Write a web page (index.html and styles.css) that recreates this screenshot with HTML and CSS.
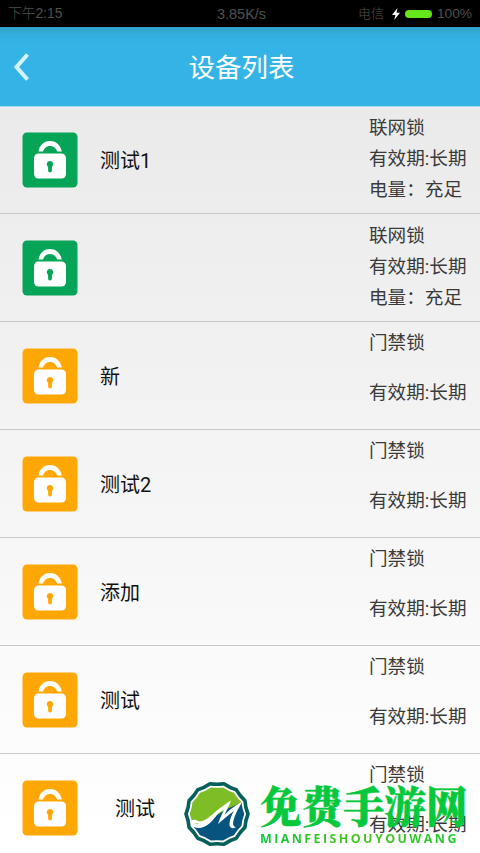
FILE: index.html
```html
<!DOCTYPE html>
<html lang="zh-CN">
<head>
<meta charset="utf-8">
<title>设备列表</title>
<link rel="stylesheet" href="styles.css">
</head>
<body>
<svg class="defs" width="0" height="0" aria-hidden="true">
  <symbol id="lock" viewBox="0 0 56 56">
    <rect x="0.5" y="0.5" width="55" height="55" rx="4.500" fill="currentColor"/>
    <path d="M16.500 19.500C17.500 13.500 21.500 9 28 9S38.500 13.500 39.800 19.500H35.300C34 16.500 32 14 28 14S22 16.500 21 19.500Z" fill="#fff"/>
    <rect x="12" y="21.500" width="32" height="25" rx="4.500" fill="#fff"/>
    <path d="M28 29a3.300 3.300 0 0 1 1.900 6V38.500a1.900 1.900 0 0 1-3.800 0V35A3.300 3.300 0 0 1 28 29Z" fill="currentColor"/>
  </symbol>
</svg>
<div class="screen">
  <div class="status">
    <span class="time">下午2:15</span>
    <span class="speed">3.85K/s</span>
    <span class="power">
      <span>电信</span>
      <svg class="bolt" viewBox="0 0 8 12"><path d="M5.500 0 0 7H3.500L2.200 12 8 4.700H4.500Z" fill="#fff"/></svg>
      <span class="battery"></span>
      <span class="percent">100%</span>
    </span>
  </div>
  <header class="bar">
    <svg class="back" viewBox="0 0 16 28"><path d="M13.500 1.500 2.500 14 13.500 26.500" fill="none" stroke="#d5f2ff" stroke-width="4"/></svg>
    <h1 class="title">设备列表</h1>
  </header>
  <ul class="list">
    <li class="row net"><svg class="lock"><use href="#lock"/></svg><span class="name">测试1</span><div class="info"><p>联网锁</p><p>有效期:长期</p><p>电量：充足</p></div></li>
    <li class="row net"><svg class="lock"><use href="#lock"/></svg><span class="name"></span><div class="info"><p>联网锁</p><p>有效期:长期</p><p>电量：充足</p></div></li>
    <li class="row door"><svg class="lock"><use href="#lock"/></svg><span class="name">新</span><div class="info"><p>门禁锁</p><p>有效期:长期</p></div></li>
    <li class="row door"><svg class="lock"><use href="#lock"/></svg><span class="name">测试2</span><div class="info"><p>门禁锁</p><p>有效期:长期</p></div></li>
    <li class="row door"><svg class="lock"><use href="#lock"/></svg><span class="name">添加</span><div class="info"><p>门禁锁</p><p>有效期:长期</p></div></li>
    <li class="row door"><svg class="lock"><use href="#lock"/></svg><span class="name">测试</span><div class="info"><p>门禁锁</p><p>有效期:长期</p></div></li>
    <li class="row door"><svg class="lock"><use href="#lock"/></svg><span class="name indent">测试</span><div class="info"><p>门禁锁</p><p>有效期:长期</p></div></li>
  </ul>
  <div class="brand">
    <svg class="logo" viewBox="-33 -33 66 66">
      <defs>
        <path id="edge" d="M31 0Q28.400 6.500 27.900 13.400 22.800 18.200 19.300 24.200 12.600 26.200 6.900 30.200 0 29.200-6.900 30.200-12.600 26.200-19.300 24.200-22.800 18.200-27.900 13.400-28.400 6.500-31 0-28.400-6.500-27.900-13.400-22.800-18.200-19.300-24.200-12.600-26.200-6.900-30.200 0-29.200 6.900-30.200 12.600-26.200 19.300-24.200 22.800-18.200 27.900-13.400 28.400-6.500 31 0Z"/>
        <clipPath id="inner"><use href="#edge" transform="scale(.88)"/></clipPath>
      </defs>
      <use href="#edge" fill="#fff" stroke="#06605a" stroke-width="3.600" stroke-linejoin="round"/>
      <g clip-path="url(#inner)">
        <path d="M-33-33H33V-12L20-6 0 7-12 10H-33Z" fill="#7fbd27"/>
        <path d="M-24 13C-13 14-6 9 0 1L12-6 24-11 33-14V33H-33V14Z" fill="#07557e"/>
        <path d="M-27 6C-23 6-22 5-19 7-10 9-6-1 14-13.500 12-8 9.500-4 7.500 1 13-5 18-8 26-13 20-4 17 3 16 9 16 12 17.500 13 19 13 15 15.500 12 14 12.500 9 13 5 14.500 1 17-3 11 1 6 6 1 10 2.500 5 5 0 7-4 0-1-2 4-7 9-13 14-18 15-23 13-19 12-17 11-18 10-20 9-23 10-27 11Z" fill="#fff"/>
      </g>
    </svg>
    <div class="words"><div class="cn">免费手游网</div><div class="en">MIANFEISHOUYOUWANG</div></div>
  </div>
</div>
</body>
</html>
```
FILE: styles.css
```css
* { box-sizing: border-box; }
body, h1, ul, p { margin: 0; padding: 0; }
body { width: 480px; height: 853px; overflow: hidden; font-family: Roboto, "Noto Sans CJK SC", sans-serif; }
.defs { position: absolute; }
.screen { position: relative; z-index: 0; height: 853px; overflow: hidden; display: flex; flex-direction: column; }
.status { flex: none; height: 27px; background: #000; color: #505050; display: grid; grid-template-columns: 1fr auto 1fr; align-items: center; padding: 1px 8px 0 8px; font-size: 13px; line-height: 26px; font-family: "Liberation Sans", "Noto Sans CJK SC", sans-serif; font-weight: 300; }
.time { font-size: 13.800px; }
.speed { font-size: 14.500px; padding-left: 3px; }
.power { display: flex; align-items: center; justify-content: flex-end; }
.percent { font-size: 13.700px; }
.bolt { width: 8px; height: 12px; margin: 0 5px 0 8px; }
.battery { width: 27px; height: 8px; border-radius: 4px; background: #66e51b; margin-right: 5px; }
.bar { flex: none; height: 80px; background: linear-gradient(#319fc6, #33aedd 7px, #34b4e6 18px); display: grid; grid-template-columns: 50px 1fr 50px; align-items: center; border-bottom: 1px solid #a8d9ec; }
.back { width: 16px; height: 28px; margin-left: 14px; }
.title { color: #fff; font-size: 26.500px; font-weight: 400; line-height: 40px; text-align: center; padding: 2px 0 0 3px; }
.list { flex: none; list-style: none; height: 756px; margin-top: -1px; background: linear-gradient(#eaeaea, #fff 730px); }
.row { height: 108px; display: flex; align-items: center; border-bottom: 1px solid #c8c8c8; padding-left: 22px; }
.row:first-child { border-top: 1px solid #a8d9ec; }
.lock { width: 56px; height: 56px; flex: none; }
.net .lock { color: #05a456; }
.door .lock { color: #ffa805; }
.name { width: 291px; padding: 2px 0 0 22px; font-size: 20px; line-height: 30px; color: #111; }
.door .indent { padding-left: 37px; }
.info { font-size: 18.600px; color: #3a3a3a; height: 107px; white-space: nowrap; padding-top: 7px; }
.row:first-child .info { padding-top: 6px; }
.door .info { padding-top: 6px; }
.info p { height: 31px; line-height: 31px; }
.door .info p + p { margin-top: 19px; }
.brand { position: absolute; z-index: 1; left: 184px; top: 781px; display: flex; }
.logo { width: 66px; height: 66px; }
.words { margin-left: 10px; color: #06c83c; }
.cn { font: 900 41.500px/44px "Noto Serif CJK SC", "Noto Sans CJK SC", serif; white-space: nowrap; -webkit-text-stroke: 0.5px #06c83c; transform: translateY(1px) scaleY(1.04); }
.en { font: 700 12.500px/14px "Open Sans", sans-serif; letter-spacing: 2.400px; margin-top: 7px; background: linear-gradient(90deg, #06c83c, #3fc51c 40%, #3fc51c 60%, #16c834); -webkit-background-clip: text; background-clip: text; color: transparent; width: 205px; white-space: nowrap; }
```
